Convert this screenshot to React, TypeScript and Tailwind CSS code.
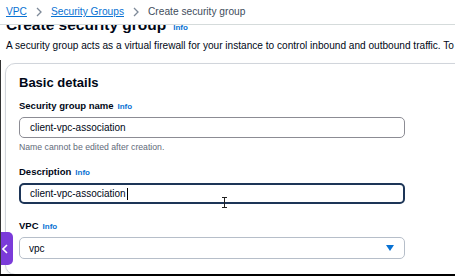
function Chevron() {
  return (
    <svg width="6" height="10" viewBox="0 0 6 10" className="mx-[9px]">
      <path d="M1 1l4 4-4 4" fill="none" stroke="#7d8998" strokeWidth="1.3" />
    </svg>
  );
}

function Info() {
  return <span className="ml-[4px] text-[8px] font-bold text-[#0972d3]">Info</span>;
}

function Label({ children }: { children: string }) {
  return (
    <div className="flex items-baseline text-[9.5px] font-bold leading-[12px] text-[#000716]">
      {children}
      <Info />
    </div>
  );
}

export default function App() {
  return (
    <div className="relative h-[276px] w-[455px] overflow-hidden bg-white font-['Liberation_Sans',Arial,sans-serif] text-[#000716]">
      <nav className="relative z-10 flex h-[25px] items-center border-b border-[#d5dbdb] bg-white px-[6px] text-[10.2px]">
        <span className="text-[#0972d3] underline">VPC</span>
        <Chevron />
        <span className="text-[#0972d3] underline">Security Groups</span>
        <Chevron />
        <span className="text-[#414d5c]">Create security group</span>
      </nav>

      <div className="-mt-[10px] flex items-baseline px-[6px] text-[15.5px] font-bold leading-[20px]">
        Create security group
        <span className="ml-[7px] text-[8px] font-bold text-[#0972d3]">Info</span>
      </div>
      <p className="mt-[1px] whitespace-nowrap px-[6px] text-[10.1px] leading-[14px] text-[#000716]">
        A security group acts as a virtual firewall for your instance to control inbound and outbound traffic. To create a new security group, complete the fields below.
      </p>

      <div className="ml-[5px] mt-[10px] h-[212px] w-[480px] rounded-[10px] border border-[#d1d5db] px-[13px] pt-[11px] shadow-[0_1px_2px_rgba(0,0,0,0.08)]">
        <h2 className="text-[13px] font-bold leading-[16px]">Basic details</h2>

        <div className="mt-[9px]">
          <Label>Security group name</Label>
        </div>
        <div className="mt-[4px] flex h-[21px] w-[386px] items-center rounded-[5px] border border-[#8c8c94] pl-[10px] text-[10px]">
          client-vpc-association
        </div>
        <div className="mt-[4px] text-[8.7px] leading-[11px] text-[#5f6b7a]">
          Name cannot be edited after creation.
        </div>

        <div className="mt-[13px]">
          <Label>Description</Label>
        </div>
        <div className="mt-[4px] flex h-[21px] w-[386px] items-center rounded-[5px] border-2 border-[#1d3557] pl-[9px] text-[10px]">
          client-vpc-association
          <span className="ml-[1px] h-[12px] w-[1px] bg-black" />
        </div>

        <div className="mt-[16px]">
          <Label>VPC</Label>
        </div>
        <div className="mt-[4px] flex h-[22px] w-[386px] items-center justify-between rounded-[5px] border border-[#b6bec9] pl-[9px] pr-[10px] text-[10px]">
          vpc
          <svg width="8" height="6" viewBox="0 0 8 6">
            <path d="M0 0h8L4 6z" fill="#0972d3" />
          </svg>
        </div>
      </div>

      <svg className="absolute left-[221px] top-[197px]" width="7" height="11" viewBox="0 0 7 11">
        <path d="M1 0.5h5M3.5 0.5v10M1 10.5h5" fill="none" stroke="#222" strokeWidth="1" />
      </svg>

      <div className="absolute left-0 top-[232px] flex h-[33px] w-[13px] items-center rounded-r-[5px] bg-[#7b3bd9] pl-[2px]">
        <svg width="6" height="10" viewBox="0 0 6 10">
          <path d="M5 1L1 5l4 4" fill="none" stroke="#fff" strokeWidth="1.6" />
        </svg>
      </div>
      <div className="absolute bottom-0 left-0 top-[60px] w-[1px] bg-[#333]" />
      <div className="absolute bottom-0 left-0 h-[2px] w-full bg-black" />
    </div>
  );
}
